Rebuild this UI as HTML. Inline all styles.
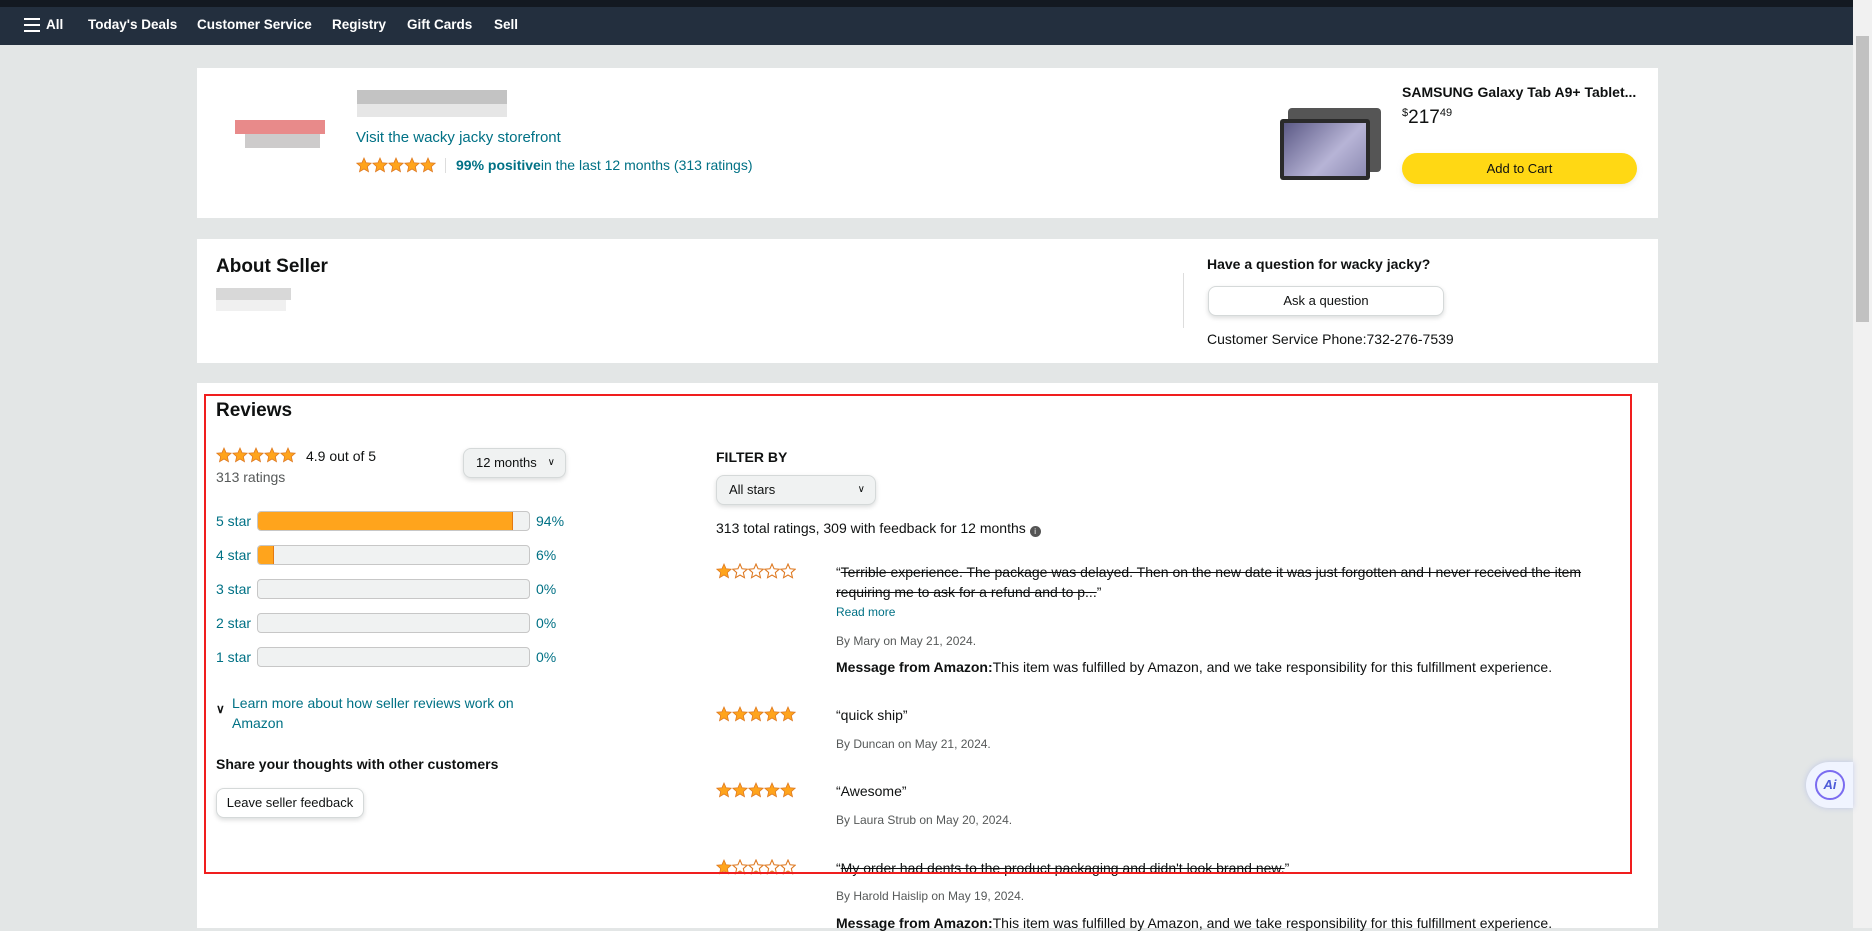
<!DOCTYPE html>
<html><head><meta charset="utf-8"><style>
*{margin:0;padding:0;box-sizing:border-box}
body{width:1872px;height:928px;overflow:hidden;background:#e3e6e6;font-family:"Liberation Sans",Arial,sans-serif;color:#0f1111;position:relative}
.a{position:absolute;white-space:nowrap}
.top{left:0;top:0;width:1872px;height:7px;background:#131921}
.nav{left:0;top:7px;width:1853px;height:38px;background:#232f3e}
.nv{color:#fff;font-size:13.5px;font-weight:bold;top:17px}
.card{background:#fff}
.t{color:#007185}
.s14{font-size:14px}
.btn{border:1px solid #d5d9d9;border-radius:8px;background:#fff;box-shadow:0 2px 5px rgba(15,17,17,.15);font-size:13px;text-align:center}
.bar{left:257px;width:273px;height:20px;background:#f0f2f2;border:1px solid #c7c7c7;border-radius:4px;overflow:hidden}
.fill{height:100%;background:#ffa41c;border-right:1px solid #e47911}
.lbl{left:216px;font-size:14px;color:#007185}
.pct{left:536px;font-size:14px;color:#007185}
.by{font-size:12px;color:#565959;left:836px}
.strike{text-decoration:line-through;font-size:14px}
</style></head><body>
<svg width="0" height="0" style="position:absolute"><defs>
<symbol id="sf" viewBox="0 0 24 24"><polygon points="12,1.5 15.1,8.6 22.8,9.3 17,14.4 18.7,22 12,18 5.3,22 7,14.4 1.2,9.3 8.9,8.6" fill="#ffa41c" stroke="#de7921" stroke-width="1.2"/></symbol>
<symbol id="se" viewBox="0 0 24 24"><polygon points="12,1.5 15.1,8.6 22.8,9.3 17,14.4 18.7,22 12,18 5.3,22 7,14.4 1.2,9.3 8.9,8.6" fill="#fff" stroke="#de7921" stroke-width="1.6"/></symbol>
</defs></svg>
<div class="a top"></div>
<div class="a nav"></div>
<div class="a" style="left:24px;top:18px;width:16px;height:2px;background:#fff;box-shadow:0 6px 0 #fff,0 12px 0 #fff"></div>
<div class="a nv" style="left:46px">All</div>
<div class="a nv" style="left:88px">Today's Deals</div>
<div class="a nv" style="left:197px">Customer Service</div>
<div class="a nv" style="left:332px">Registry</div>
<div class="a nv" style="left:407px">Gift Cards</div>
<div class="a nv" style="left:494px">Sell</div>
<div class="a" style="left:1853px;top:0;width:19px;height:928px;background:#f1f1f1"></div>
<div class="a" style="left:1856px;top:36px;width:13px;height:286px;background:#c1c1c1"></div>

<div class="a card" style="left:197px;top:68px;width:1461px;height:150px"></div>
<div class="a" style="left:235px;top:120px;width:90px;height:14px;background:#e88a8a"></div>
<div class="a" style="left:245px;top:134px;width:75px;height:14px;background:#b8b5b5;opacity:.7"></div>
<div class="a" style="left:357px;top:90px;width:150px;height:14px;background:#c3c3c3"></div>
<div class="a" style="left:357px;top:104px;width:150px;height:13px;background:#e6e6e6"></div>
<div class="a t" style="left:356px;top:129px;font-size:15px">Visit the wacky jacky storefront</div>
<div class="a" style="left:356px;top:157px;height:16px">
<svg width="82" height="16"><use href="#sf" x="0" width="16" height="16"/><use href="#sf" x="16" width="16" height="16"/><use href="#sf" x="32" width="16" height="16"/><use href="#sf" x="48" width="16" height="16"/><use href="#sf" x="64" width="16" height="16"/></svg></div>
<div class="a" style="left:445px;top:158px;width:1px;height:15px;background:#ddd"></div>
<div class="a t" style="left:456px;top:157px;font-size:14px"><b>99% positive</b>in the last 12 months (313 ratings)</div>
<div class="a" style="left:1288px;top:108px;width:93px;height:64px;background:#555;border-radius:4px"></div>
<div class="a" style="left:1280px;top:119px;width:90px;height:61px;background:#2a2a2a;border-radius:3px"></div>
<div class="a" style="left:1284px;top:123px;width:82px;height:53px;background:linear-gradient(135deg,#5c5a86,#b7b4d6 60%,#8d8bb3)"></div>
<div class="a" style="left:1402px;top:84px;font-size:14px;font-weight:bold">SAMSUNG Galaxy Tab A9+ Tablet...</div>
<div class="a" style="left:1402px;top:107px;font-size:19px"><span style="font-size:11px;vertical-align:7px">$</span>217<span style="font-size:11px;vertical-align:7px">49</span></div>
<div class="a" style="left:1402px;top:153px;width:235px;height:31px;background:#ffd814;border-radius:16px;font-size:13px;text-align:center;line-height:31px;box-shadow:0 2px 5px rgba(213,217,217,.5)">Add to Cart</div>

<div class="a card" style="left:197px;top:239px;width:1461px;height:124px"></div>
<div class="a" style="left:216px;top:256px;font-size:19px;font-weight:bold">About Seller</div>
<div class="a" style="left:216px;top:288px;width:75px;height:12px;background:#d8d8d8"></div>
<div class="a" style="left:216px;top:300px;width:70px;height:11px;background:#f0f0f0"></div>
<div class="a" style="left:1183px;top:273px;width:1px;height:55px;background:#ddd"></div>
<div class="a" style="left:1207px;top:256px;font-size:14px;font-weight:bold">Have a question for wacky jacky?</div>
<div class="a btn" style="left:1208px;top:286px;width:236px;height:30px;line-height:28px">Ask a question</div>
<div class="a" style="left:1207px;top:331px;font-size:14px">Customer Service Phone:732-276-7539</div>

<div class="a card" style="left:197px;top:383px;width:1461px;height:545px"></div>
<div class="a" style="left:216px;top:400px;font-size:19px;font-weight:bold">Reviews</div>
<div class="a" style="left:216px;top:447px"><svg width="82" height="16"><use href="#sf" x="0" width="16" height="16"/><use href="#sf" x="16" width="16" height="16"/><use href="#sf" x="32" width="16" height="16"/><use href="#sf" x="48" width="16" height="16"/><use href="#sf" x="64" width="16" height="16"/></svg></div>
<div class="a s14" style="left:306px;top:448px">4.9 out of 5</div>
<div class="a s14" style="left:216px;top:469px;color:#565959">313 ratings</div>
<div class="a btn" style="left:463px;top:448px;width:103px;height:30px;line-height:28px;background:#f0f2f2;text-align:left;padding-left:12px">12 months <span style="position:absolute;right:10px;font-size:10px">&#x2228;</span></div>

<div class="a lbl" style="top:513px">5 star</div><div class="a bar" style="top:511px"><div class="fill" style="width:94%"></div></div><div class="a pct" style="top:513px">94%</div>
<div class="a lbl" style="top:547px">4 star</div><div class="a bar" style="top:545px"><div class="fill" style="width:6%"></div></div><div class="a pct" style="top:547px">6%</div>
<div class="a lbl" style="top:581px">3 star</div><div class="a bar" style="top:579px"></div><div class="a pct" style="top:581px">0%</div>
<div class="a lbl" style="top:615px">2 star</div><div class="a bar" style="top:613px"></div><div class="a pct" style="top:615px">0%</div>
<div class="a lbl" style="top:649px">1 star</div><div class="a bar" style="top:647px"></div><div class="a pct" style="top:649px">0%</div>

<div class="a" style="left:216px;top:702px;font-size:12px;font-weight:bold">&#x2228;</div>
<div class="a t s14" style="left:232px;top:693px;line-height:20px">Learn more about how seller reviews work on<br>Amazon</div>
<div class="a" style="left:216px;top:756px;font-size:14px;font-weight:bold">Share your thoughts with other customers</div>
<div class="a btn" style="left:216px;top:788px;width:148px;height:30px;line-height:28px">Leave seller feedback</div>

<div class="a" style="left:716px;top:449px;font-size:14px;font-weight:bold">FILTER BY</div>
<div class="a btn" style="left:716px;top:475px;width:160px;height:30px;line-height:28px;background:#f0f2f2;text-align:left;padding-left:12px">All stars <span style="position:absolute;right:10px;font-size:10px">&#x2228;</span></div>
<div class="a s14" style="left:716px;top:520px">313 total ratings, 309 with feedback for 12 months <span style="display:inline-block;width:11px;height:11px;border-radius:50%;background:#555;color:#fff;font-size:8px;text-align:center;line-height:11px;vertical-align:-1px">i</span></div>

<div class="a" style="left:716px;top:563px"><svg width="82" height="16"><use href="#sf" x="0" width="16" height="16"/><use href="#se" x="16" width="16" height="16"/><use href="#se" x="32" width="16" height="16"/><use href="#se" x="48" width="16" height="16"/><use href="#se" x="64" width="16" height="16"/></svg></div>
<div class="a" style="left:836px;top:562px;font-size:14px;line-height:20px;white-space:normal;width:780px">“<span class="strike">Terrible experience. The package was delayed. Then on the new date it was just forgotten and I never received the item requiring me to ask for a refund and to p...</span>”</div>
<div class="a t" style="left:836px;top:605px;font-size:12px">Read more</div>
<div class="a by" style="top:634px">By Mary on May 21, 2024.</div>
<div class="a s14" style="left:836px;top:659px"><b>Message from Amazon:</b>This item was fulfilled by Amazon, and we take responsibility for this fulfillment experience.</div>

<div class="a" style="left:716px;top:706px"><svg width="82" height="16"><use href="#sf" x="0" width="16" height="16"/><use href="#sf" x="16" width="16" height="16"/><use href="#sf" x="32" width="16" height="16"/><use href="#sf" x="48" width="16" height="16"/><use href="#sf" x="64" width="16" height="16"/></svg></div>
<div class="a s14" style="left:836px;top:707px">“quick ship”</div>
<div class="a by" style="top:737px">By Duncan on May 21, 2024.</div>

<div class="a" style="left:716px;top:782px"><svg width="82" height="16"><use href="#sf" x="0" width="16" height="16"/><use href="#sf" x="16" width="16" height="16"/><use href="#sf" x="32" width="16" height="16"/><use href="#sf" x="48" width="16" height="16"/><use href="#sf" x="64" width="16" height="16"/></svg></div>
<div class="a s14" style="left:836px;top:783px">“Awesome”</div>
<div class="a by" style="top:813px">By Laura Strub on May 20, 2024.</div>

<div class="a" style="left:716px;top:859px"><svg width="82" height="16"><use href="#sf" x="0" width="16" height="16"/><use href="#se" x="16" width="16" height="16"/><use href="#se" x="32" width="16" height="16"/><use href="#se" x="48" width="16" height="16"/><use href="#se" x="64" width="16" height="16"/></svg></div>
<div class="a s14" style="left:836px;top:860px">“<span class="strike">My order had dents to the product packaging and didn't look brand new.</span>”</div>
<div class="a by" style="top:889px">By Harold Haislip on May 19, 2024.</div>
<div class="a s14" style="left:836px;top:915px"><b>Message from Amazon:</b>This item was fulfilled by Amazon, and we take responsibility for this fulfillment experience.</div>

<div class="a" style="left:204px;top:394px;width:1428px;height:480px;border:2px solid #f01e1e"></div>

<div class="a" style="left:1806px;top:762px;width:47px;height:46px;background:#f0f4ff;border-radius:23px 0 0 23px;box-shadow:0 0 6px rgba(120,140,230,.35)"></div>
<div class="a" style="left:1815px;top:770px;width:30px;height:30px;border-radius:50%;border:2px solid #7b6cf0;color:#4c5ad8;font-weight:bold;font-size:13px;font-style:italic;text-align:center;line-height:26px">Ai</div>
</body></html>
